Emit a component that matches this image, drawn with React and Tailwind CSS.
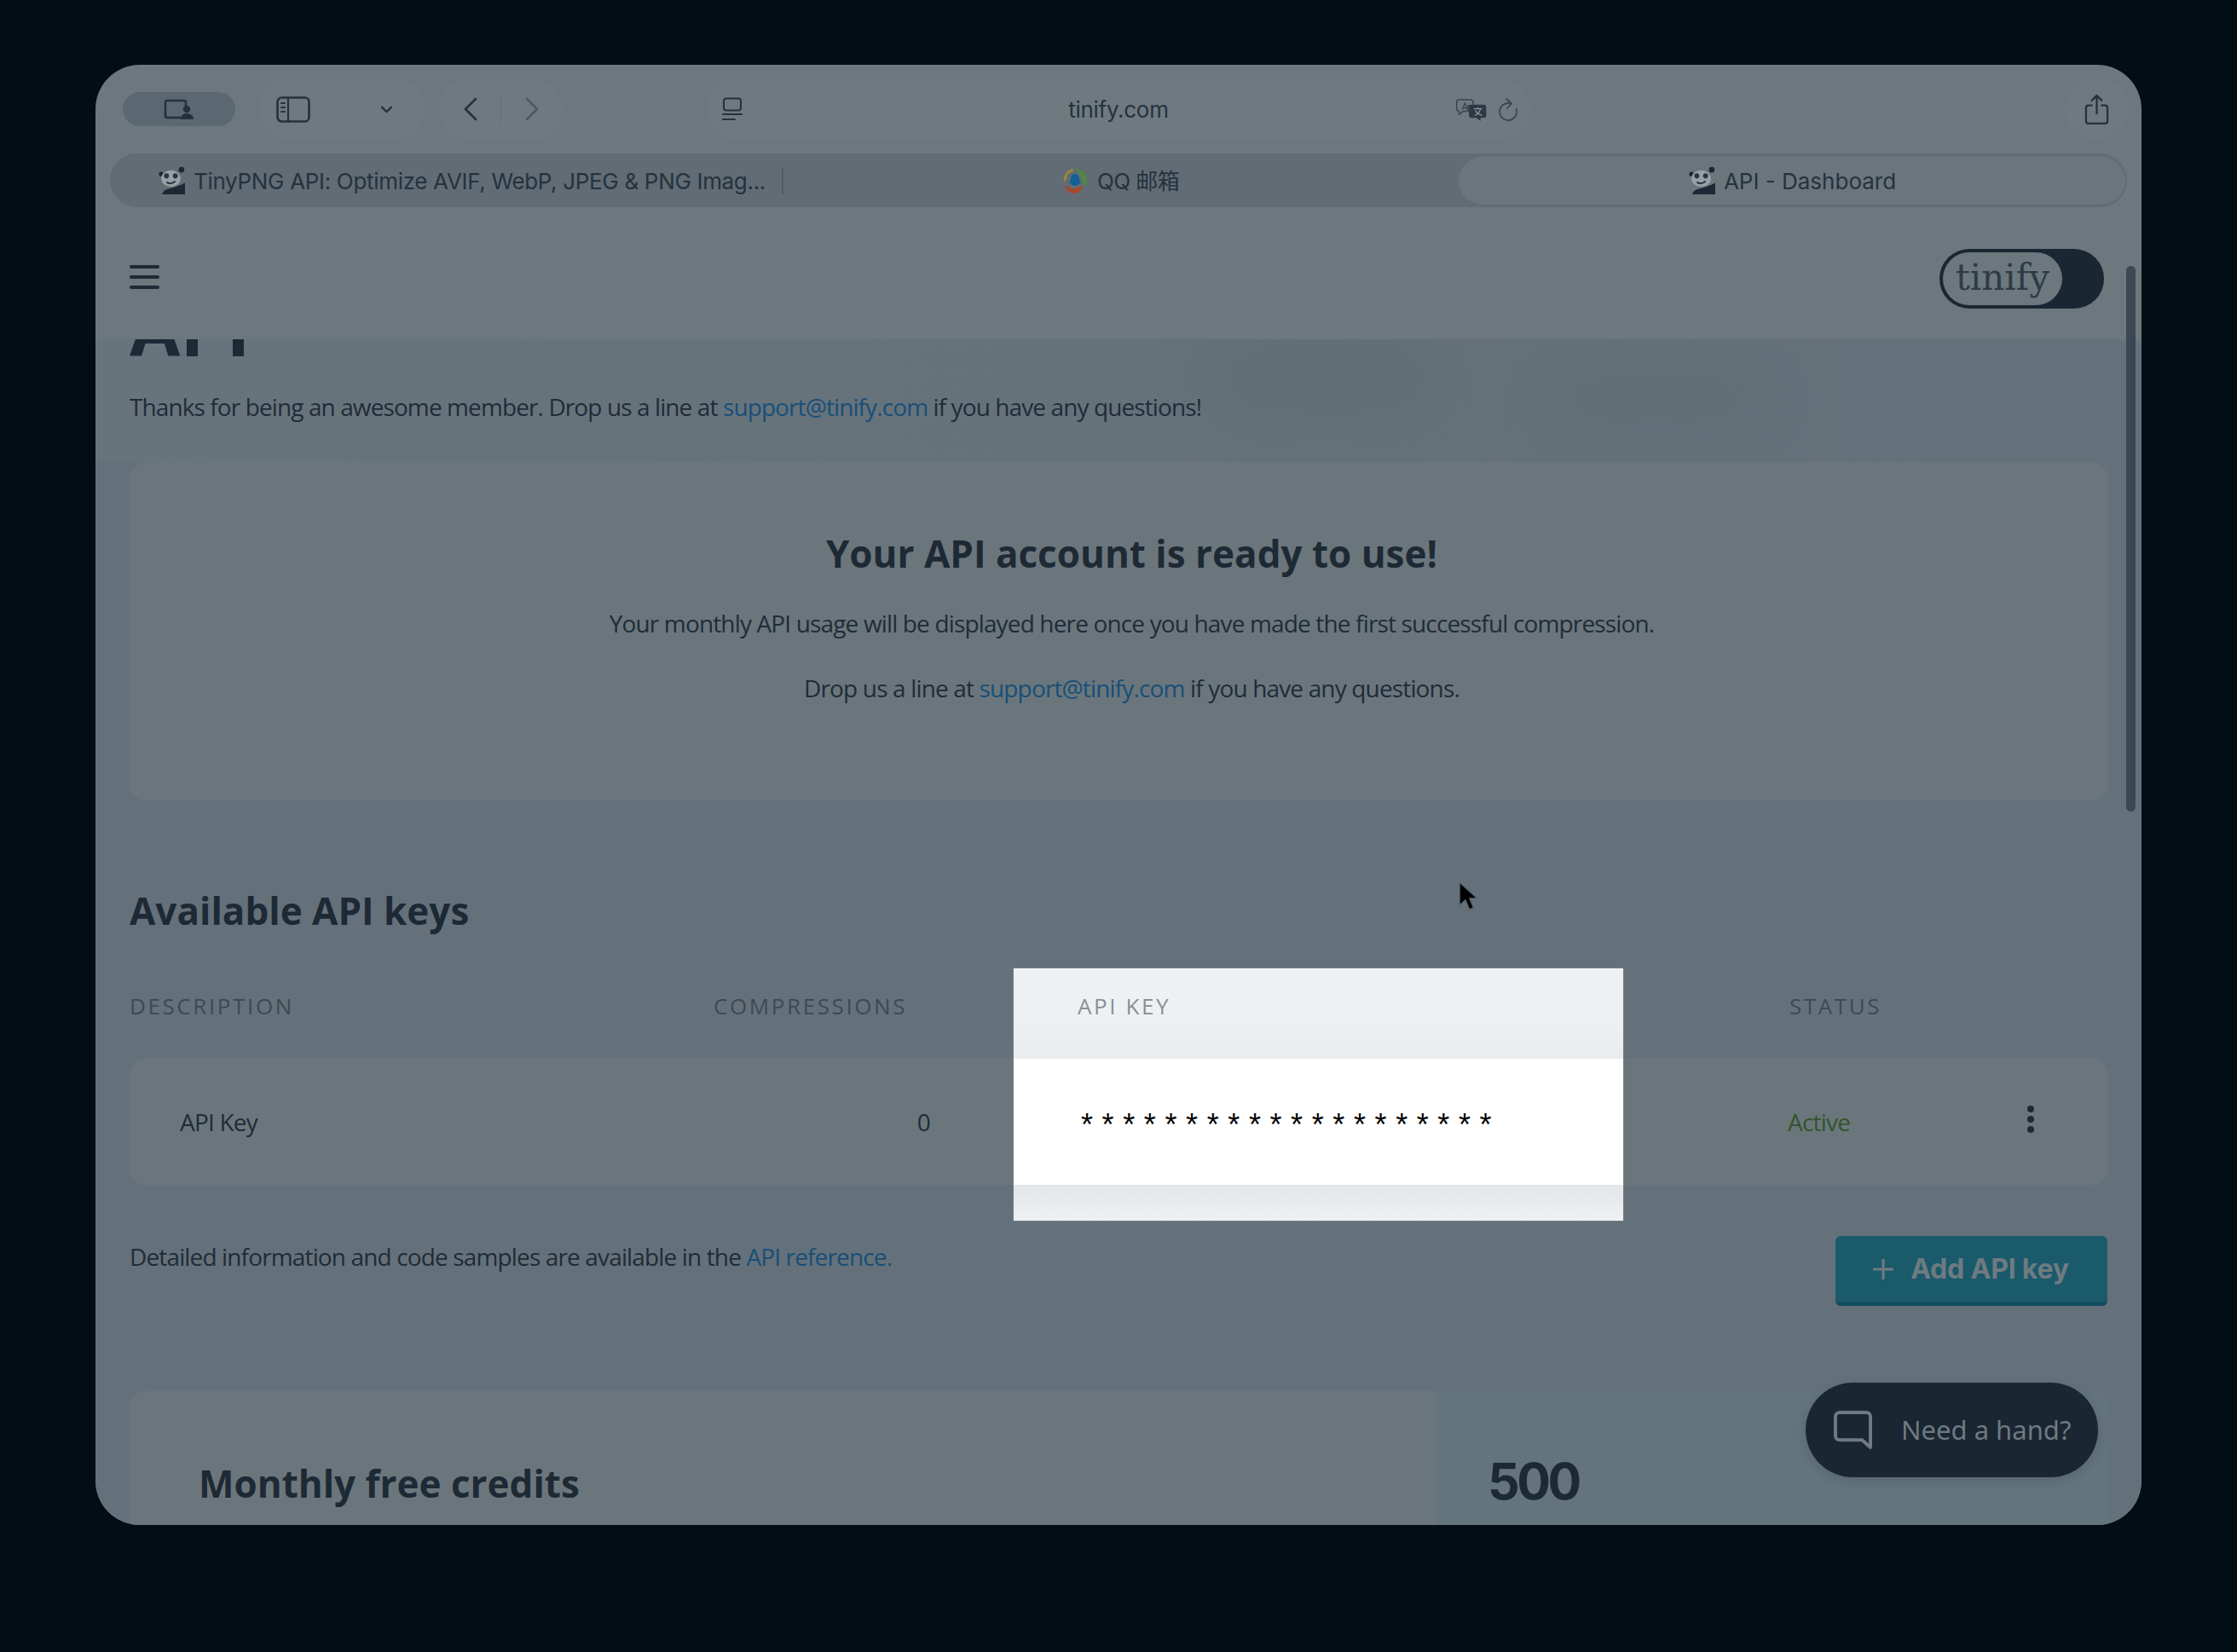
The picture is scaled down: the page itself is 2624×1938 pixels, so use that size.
import React from "react";

const open = "font-['Open_Sans','Noto_Sans',sans-serif]";
const noto = "font-['Noto_Sans','Open_Sans',sans-serif]";
const inter = "font-['Inter','Noto_Sans_CJK_SC',sans-serif]";

const Panda = ({ className }) => (
  <svg viewBox="0 0 32 32" className={className}>
    <circle cx="4" cy="9" r="2.6" fill="#1c2833" />
    <circle cx="27" cy="4" r="3.2" fill="#1c2833" />
    <ellipse cx="15" cy="14" rx="11" ry="9.5" fill="#98a1a6" />
    <ellipse cx="10" cy="11" rx="2.8" ry="3" fill="#2a3640" />
    <ellipse cx="20" cy="11" rx="2.8" ry="3" fill="#2a3640" />
    <path d="M10 18c3 2 7 2 10-1" stroke="#2a3640" strokeWidth="2" fill="none" />
    <path d="M5 32c1-4 4-6 10-7 5-1 10-3 16-6v13z" fill="#1c2833" />
  </svg>
);

const QQ = () => (
  <svg viewBox="0 0 32 32" className="w-[32px] h-[32px] mr-[10px]">
    <path d="M14 2C7 3 2 9 3 17c2-1 2-2 3-3 0-5 3-8 8-9z" fill="#9c8a34" />
    <path d="M18 2c7 1 12 7 12 14 0 3-1 5-2 7-1-2-3-2-3-4 1-6-2-11-7-14z" fill="#4f8a3e" />
    <path d="M4 21c2 1 4 3 7 4 5 1 9-1 13-3 2 3-3 9-9 9-5 0-10-4-11-10z" fill="#a8472c" />
    <path d="M16 8c3 0 5 3 5 6l2 6-2-1c-1 2-3 3-5 3s-4-1-5-3l-2 1 2-6c0-3 2-6 5-6z" fill="#145f94" />
  </svg>
);

const stroke = { fill: "none", stroke: "#25323d", strokeLinecap: "round", strokeLinejoin: "round" };

export default function App() {
  return (
    <div className="w-[2624px] h-[1938px] bg-[#020d14] pt-[76px] pl-[112px] overflow-hidden">
      <div className="relative w-[2400px] h-[1713px] rounded-[52px] overflow-hidden bg-[#6c787e] flex flex-col">
        {/* Toolbar */}
        <div className="h-[104px] shrink-0 flex items-start pt-[16px] relative">
          <div className="ml-[32px] mt-[16px] w-[132px] h-[40px] rounded-[20px] bg-[#5c6871] flex items-center justify-center">
            <svg viewBox="0 0 36 24" className="w-[36px] h-[24px]">
              <path d="M20 22H4a2 2 0 0 1-2-2V4a2 2 0 0 1 2-2h20a2 2 0 0 1 2 2v4" {...stroke} strokeWidth="2.6" />
              <circle cx="27" cy="12" r="4.2" fill="#25323d" />
              <path d="M20 24c0-5 3-7 7-7s8 2 8 7z" fill="#25323d" />
            </svg>
          </div>
          <div className="ml-[28px] w-[195px] h-[72px] rounded-[36px] bg-[#6f7a80] flex items-center pl-[20px]">
            <svg viewBox="0 0 40 31" className="w-[40px] h-[31px]">
              <rect x="1.5" y="1.5" width="37" height="28" rx="5" {...stroke} strokeWidth="2.6" />
              <path d="M14 2v27M6 8h4M6 13h4M6 18h4" {...stroke} strokeWidth="2.2" />
            </svg>
            <svg viewBox="0 0 16 10" className="w-[15px] h-[9px] ml-[82px]">
              <path d="M2 2l6 6 6-6" {...stroke} strokeWidth="2.6" />
            </svg>
          </div>
          <div className="ml-[16px] w-[145px] h-[72px] rounded-[36px] bg-[#6f7a80] flex items-center relative">
            <svg viewBox="0 0 18 28" className="absolute left-[28px] top-[22px] w-[18px] h-[28px]">
              <path d="M15 2L3 14l12 12" {...stroke} strokeWidth="2.6" />
            </svg>
            <div className="absolute left-[72px] top-[16px] w-px h-[40px] bg-[#657078]" />
            <svg viewBox="0 0 18 28" className="absolute left-[100px] top-[22px] w-[18px] h-[28px]">
              <path d="M3 2l12 12L3 26" {...stroke} stroke="#4d5962" strokeWidth="2.6" />
            </svg>
          </div>
          <div className="ml-[169px] w-[966px] h-[72px] rounded-[36px] bg-[#6f7a80] relative flex items-center justify-center">
            <svg viewBox="0 0 24 28" className="absolute left-[18px] top-[22px] w-[24px] h-[28px]">
              <rect x="2" y="1.5" width="20" height="14" rx="3" {...stroke} strokeWidth="2" />
              <path d="M1 20h22M1 26h14" {...stroke} strokeWidth="2" />
            </svg>
            <span className={`${inter} text-[26px] leading-none text-[#25323d] tracking-[-0.3px] mt-[2px]`}>tinify.com</span>
            <svg viewBox="0 0 38 28" className="absolute left-[878px] top-[24px] w-[38px] h-[27px]">
              <path d="M5 1h13a3 3 0 0 1 3 3v4h-6v7H9l-5 4v-4a3 3 0 0 1-3-3V4a3 3 0 0 1 3-3z" {...stroke} stroke="#3a4650" strokeWidth="1.6" />
              <path d="M8 13l3-8 3 8M9 11h4" {...stroke} stroke="#3a4650" strokeWidth="1.4" />
              <path d="M19 7h15a3 3 0 0 1 3 3v10a3 3 0 0 1-3 3h-4v4l-5-4h-6a3 3 0 0 1-3-3V10a3 3 0 0 1 3-3z" fill="#2c3843" />
              <path d="M22 12h10M27 10v2M23 20c3-1 6-4 7-8M24 14c1 3 4 5 8 6" fill="none" stroke="#8a9499" strokeWidth="1.3" />
            </svg>
            <svg viewBox="0 0 24 28" className="absolute left-[928px] top-[23px] w-[24px] h-[28px]">
              <path d="M15 6.5a10 10 0 1 0 6.6 6.5" {...stroke} stroke="#3a4650" strokeWidth="1.8" />
              <path d="M10 1l6 5.5-5 5.5" {...stroke} stroke="#3a4650" strokeWidth="1.8" />
            </svg>
          </div>
          <div className="ml-[627px] w-[75px] h-[72px] rounded-[36px] bg-[#6f7a80] flex items-center justify-center">
            <svg viewBox="0 0 30 38" className="w-[29px] h-[37px]">
              <path d="M9 14H5a3 3 0 0 0-3 3v16a3 3 0 0 0 3 3h20a3 3 0 0 0 3-3V17a3 3 0 0 0-3-3h-4" {...stroke} strokeWidth="2.4" />
              <path d="M15 24V2M9 8l6-6 6 6" {...stroke} strokeWidth="2.4" />
            </svg>
          </div>
        </div>

        {/* Tab bar */}
        <div className={`${inter} ml-[17px] w-[2366px] h-[63px] shrink-0 rounded-[32px] bg-[#616c74] flex items-center text-[26px] text-[#25323d] leading-none`}>
          <div className="w-[788px] h-full flex items-center pl-[56px] relative">
            <Panda className="w-[33px] h-[33px] mr-[9px]" />
            <span className="tracking-[-0.32px] whitespace-nowrap mt-[2px]">TinyPNG API: Optimize AVIF, WebP, JPEG &amp; PNG Imag...</span>
            <div className="absolute left-[788px] top-[16px] w-[2px] h-[32px] bg-[#515d66]" />
          </div>
          <div className="w-[794px] h-full flex items-center justify-center">
            <QQ />
            <span className="whitespace-nowrap mt-[2px] tracking-[-0.6px]">QQ 邮箱</span>
          </div>
          <div className="w-[782px] h-[56px] rounded-[28px] bg-[#6b767c] flex items-center justify-center">
            <Panda className="w-[33px] h-[33px] mr-[9px]" />
            <span className="whitespace-nowrap mt-[2px]">API - Dashboard</span>
          </div>
        </div>

        {/* Site header */}
        <div className="h-[155px] shrink-0 bg-[#6c787e] flex items-center justify-between pl-[40px] pr-[44px] relative z-10">
          <div className="flex flex-col gap-[8px] mt-[8px]">
            <div className="w-[35px] h-[4px] rounded-full bg-[#1d2a35]" />
            <div className="w-[35px] h-[4px] rounded-full bg-[#1d2a35]" />
            <div className="w-[35px] h-[4px] rounded-full bg-[#1d2a35]" />
          </div>
          <div className="w-[193px] h-[70px] rounded-[35px] bg-[#1a2632] mt-[13px] pl-[4px] py-[4px]">
            <div className="w-[140px] h-[62px] rounded-[31px] bg-[#6c787e] flex items-center justify-center">
              <span className="font-['DejaVu_Serif',serif] text-[42px] leading-none text-[#2e3b46] tracking-[0px] mb-[2px]">tinify</span>
            </div>
          </div>
        </div>

        {/* Page */}
        <div className="flex-1 min-h-0 bg-[#65717a] pl-[40px] pr-[39px] relative">
          <div className="absolute inset-x-0 top-0 h-[144px] overflow-hidden bg-gradient-to-r from-[#68747c] via-[#66727a] to-[#65717a]">
            <div className="absolute left-[1290px] top-[-10px] w-[300px] h-[110px] rounded-full bg-[#5f6c74] blur-[40px] opacity-70" />
            <div className="absolute left-[1680px] top-[20px] w-[300px] h-[100px] rounded-full bg-[#5f6c74] blur-[40px] opacity-60" />
          </div>
          <div className="relative">
            <h1 className={`${open} font-bold text-[86px] leading-none text-[#1d2a35] mt-[-56px]`}>API</h1>
            <p className={`${open} text-[28px] leading-[40px] text-[#1f2c37] mt-[29px] tracking-[-0.9px] whitespace-nowrap`}>
              Thanks for being an awesome member. Drop us a line at <a className="text-[#174f78]">support@tinify.com</a> if you have any questions!
            </p>
            <section className="mt-[45px] h-[397px] rounded-[20px] bg-[#6b767c] flex flex-col items-center pt-[79px] pl-[30px]">
              <h2 className={`${open} font-bold text-[44px] leading-[56px] text-[#1d2a35]`}>Your API account is ready to use!</h2>
              <p className={`${open} text-[28px] leading-[40px] text-[#1f2c37] mt-[34px] tracking-[-0.85px] whitespace-nowrap`}>
                Your monthly API usage will be displayed here once you have made the first successful compression.
              </p>
              <p className={`${open} text-[28px] leading-[40px] text-[#1f2c37] mt-[36px] tracking-[-0.85px] whitespace-nowrap`}>
                Drop us a line at <a className="text-[#174f78]">support@tinify.com</a> if you have any questions.
              </p>
            </section>
            <h2 className={`${open} font-bold text-[44px] leading-[56px] text-[#1d2a35] mt-[101px]`}>Available API keys</h2>
            <div className={`${open} mt-[66px] grid grid-cols-[685px_427px_835px_1fr] text-[26px] leading-[36px] tracking-[2.6px] text-[#3d4a54] h-[36px]`}>
              <span>DESCRIPTION</span>
              <span>COMPRESSIONS</span>
              <span />
              <span>STATUS</span>
            </div>
            <div className={`${open} mt-[44px] h-[148px] rounded-[20px] bg-[#6b767c] grid grid-cols-[685px_254px_1008px_285px_1fr] items-center text-[28px] tracking-[-0.8px] text-[#1f2c37]`}>
              <span className="pl-[59px]">API Key</span>
              <span className="text-right">0</span>
              <span />
              <span className="text-[#33552b] ml-[-2px]">Active</span>
              <svg viewBox="0 0 10 34" className="w-[10px] h-[34px] mt-[-6px] ml-[-7px]">
                <circle cx="5" cy="5" r="4" fill="#1d2a35" />
                <circle cx="5" cy="17" r="4" fill="#1d2a35" />
                <circle cx="5" cy="29" r="4" fill="#1d2a35" />
              </svg>
            </div>
            <div className="flex items-start justify-between mt-[60px]">
              <p className={`${open} text-[28px] leading-[40px] text-[#1f2c37] mt-[4px] tracking-[-0.86px] whitespace-nowrap`}>
                Detailed information and code samples are available in the <a className="text-[#174f78]">API reference.</a>
              </p>
              <button className="w-[319px] h-[82px] rounded-[6px] bg-[#1a5a6b] border-b-[5px] border-[#124d5e] flex items-center justify-center gap-[19px] text-[#6e7b81] mr-[1px] pr-[2px]">
                <svg viewBox="0 0 26 26" className="w-[26px] h-[26px]">
                  <path d="M13 1v24M1 13h24" stroke="#6e7b81" strokeWidth="3" />
                </svg>
                <span className={`${inter} font-bold text-[32px] leading-none tracking-[-0.2px]`}>Add API key</span>
              </button>
            </div>
            <section className="mt-[100px] h-[200px] rounded-t-[20px] overflow-hidden flex">
              <div className="w-[1532px] bg-[#6b767c] pl-[81px] pt-[80px]">
                <h2 className={`${open} font-bold text-[44px] leading-[56px] text-[#1d2a35]`}>Monthly free credits</h2>
              </div>
              <div className="flex-1 bg-[#63747c] pl-[61px] pt-[74px]">
                <span className={`${inter} font-bold text-[59px] leading-[64px] tracking-[-3.5px] text-[#1d2a35]`}>500</span>
              </div>
            </section>
          </div>
        </div>

        {/* Scrollbar */}
        <div className="absolute left-[2382px] top-[236px] w-[11px] h-[640px] rounded-full bg-[#3b4853] z-20" />

        {/* Highlighted API key column */}
        <div className={`${open} absolute left-[1077px] top-[1060px] w-[715px] h-[296px] z-30 flex flex-col shadow-[0_0_1px_#aab0b4]`}>
          <div className="h-[106px] bg-gradient-to-b from-[#eef1f3] via-[#eef1f3] to-[#e9eced] pl-[75px] pt-[26px] text-[26px] leading-[36px] tracking-[2.6px] text-[#889095]">API KEY</div>
          <div className="h-[148px] bg-white pl-[79px] pt-[58px] text-[36px] leading-[40px] text-black font-['Liberation_Sans','DejaVu_Sans',sans-serif] whitespace-nowrap">
            <span className="inline-block tracking-[10.6px]">********************</span>
          </div>
          <div className="flex-1 bg-gradient-to-b from-[#e2e6e8] to-[#eef1f3]" />
        </div>

        {/* Chat widget */}
        <div className="absolute left-[2006px] top-[1546px] w-[343px] h-[111px] rounded-[56px] bg-[#1a2632] z-30 flex items-center pl-[33px] shadow-[0_4px_14px_rgba(0,0,0,0.12)]">
          <svg viewBox="0 0 46 46" className="w-[45px] h-[45px]">
            <path d="M7 2h32a5 5 0 0 1 5 5v37l-10-9H7a5 5 0 0 1-5-5V7a5 5 0 0 1 5-5z" fill="none" stroke="#6f7a80" strokeWidth="4" strokeLinejoin="round" />
          </svg>
          <span className={`${noto} ml-[34px] text-[31px] leading-none text-[#6f7a80] whitespace-nowrap`}>Need a hand?</span>
        </div>

        {/* Cursor */}
        <svg viewBox="0 0 24 36" className="absolute left-[1598px] top-[958px] w-[24px] h-[36px] z-30">
          <path d="M2 1v27l7-6 4.5 11 5-2-4.5-11h9z" fill="#000" stroke="#5c6871" strokeWidth="1.5" />
        </svg>
      </div>
    </div>
  );
}
